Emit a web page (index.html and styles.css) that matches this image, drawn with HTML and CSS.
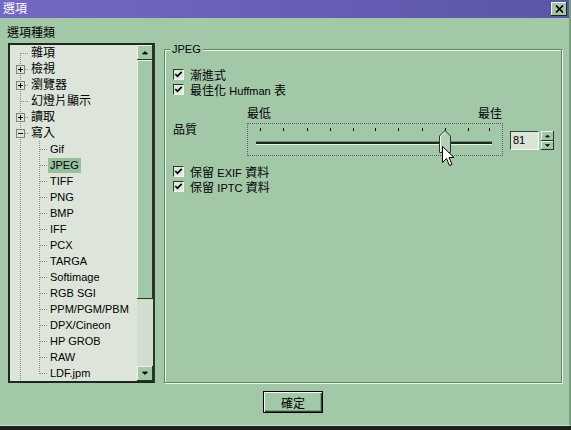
FILE: index.html
```html
<!DOCTYPE html>
<html lang="zh-TW">
<head>
    <meta charset="UTF-8">
    <title>選項</title>
    <link rel="stylesheet" href="styles.css">
</head>
<body>
    <div class="window">
        <div class="titlebar">
            <span class="title">選項</span>
            <button class="close">
                <svg width="9" height="8" viewBox="0 0 9 8"><path d="M1 0.5 L8 7.5 M8 0.5 L1 7.5" stroke="#000" stroke-width="1.7"/></svg>
            </button>
        </div>

        <div class="main">
            <div class="left">
                <div class="cat-label">選項種類</div>
                <div class="tree">
                    <ul class="tree-list">
                        <li class="row"><span class="g g-first"></span><span class="lbl">雜項</span></li>
                        <li class="row"><span class="g g-tee"><span class="pm plus"></span></span><span class="lbl">檢視</span></li>
                        <li class="row"><span class="g g-tee"><span class="pm plus"></span></span><span class="lbl">瀏覽器</span></li>
                        <li class="row"><span class="g g-tee"></span><span class="lbl">幻燈片顯示</span></li>
                        <li class="row"><span class="g g-tee"><span class="pm plus"></span></span><span class="lbl">讀取</span></li>
                        <li class="row"><span class="g g-tee"><span class="pm"></span></span><span class="lbl">寫入</span></li>
                        <li class="row"><span class="g g-pass"></span><span class="g g-tee"></span><span class="lbl en">Gif</span></li>
                        <li class="row"><span class="g g-pass"></span><span class="g g-tee"></span><span class="lbl en selected">JPEG</span></li>
                        <li class="row"><span class="g g-pass"></span><span class="g g-tee"></span><span class="lbl en">TIFF</span></li>
                        <li class="row"><span class="g g-pass"></span><span class="g g-tee"></span><span class="lbl en">PNG</span></li>
                        <li class="row"><span class="g g-pass"></span><span class="g g-tee"></span><span class="lbl en">BMP</span></li>
                        <li class="row"><span class="g g-pass"></span><span class="g g-tee"></span><span class="lbl en">IFF</span></li>
                        <li class="row"><span class="g g-pass"></span><span class="g g-tee"></span><span class="lbl en">PCX</span></li>
                        <li class="row"><span class="g g-pass"></span><span class="g g-tee"></span><span class="lbl en">TARGA</span></li>
                        <li class="row"><span class="g g-pass"></span><span class="g g-tee"></span><span class="lbl en">Softimage</span></li>
                        <li class="row"><span class="g g-pass"></span><span class="g g-tee"></span><span class="lbl en">RGB SGI</span></li>
                        <li class="row"><span class="g g-pass"></span><span class="g g-tee"></span><span class="lbl en">PPM/PGM/PBM</span></li>
                        <li class="row"><span class="g g-pass"></span><span class="g g-tee"></span><span class="lbl en">DPX/Cineon</span></li>
                        <li class="row"><span class="g g-pass"></span><span class="g g-tee"></span><span class="lbl en">HP GROB</span></li>
                        <li class="row"><span class="g g-pass"></span><span class="g g-tee"></span><span class="lbl en">RAW</span></li>
                        <li class="row"><span class="g g-pass"></span><span class="g g-last"></span><span class="lbl en">LDF.jpm</span></li>
                    </ul>
                    <div class="vscroll">
                        <div class="sb-btn">
                            <svg width="16" height="15" viewBox="0 0 16 15"><path d="M5.5 9 L8 6.5 L10.5 9 Z" fill="#000" stroke="#000" stroke-width="0.8"/></svg>
                        </div>
                        <div class="sb-track"><div class="sb-thumb"></div></div>
                        <div class="sb-btn">
                            <svg width="16" height="15" viewBox="0 0 16 15"><path d="M5.5 6 L8 8.5 L10.5 6 Z" fill="#000" stroke="#000" stroke-width="0.8"/></svg>
                        </div>
                    </div>
                </div>
            </div>

            <div class="group">
                <span class="legend">JPEG</span>

                <div class="checks">
                    <label class="check"><span class="cb"><svg width="9" height="9" viewBox="0 0 9 9"><polyline points="1.3,4 3.5,6.3 7.7,1.8" fill="none" stroke="#000" stroke-width="1.8"/></svg></span><span>漸進式</span></label>
                    <label class="check"><span class="cb"><svg width="9" height="9" viewBox="0 0 9 9"><polyline points="1.3,4 3.5,6.3 7.7,1.8" fill="none" stroke="#000" stroke-width="1.8"/></svg></span><span>最佳化 <span class="en">Huffman</span> 表</span></label>
                </div>

                <div class="quality">
                    <div class="q-label">品質</div>
                    <div class="q-slider">
                        <div class="q-ends"><span>最低</span><span>最佳</span></div>
                        <div class="slider">
                            <svg width="254" height="31" viewBox="0 0 254 31">
                                <g fill="#000">
                                    <rect x="12" y="4" width="1" height="3"/>
                                    <rect x="35" y="4" width="1" height="3"/>
                                    <rect x="59" y="4" width="1" height="3"/>
                                    <rect x="82" y="4" width="1" height="3"/>
                                    <rect x="105" y="4" width="1" height="3"/>
                                    <rect x="127" y="4" width="1" height="3"/>
                                    <rect x="150" y="4" width="1" height="3"/>
                                    <rect x="174" y="4" width="1" height="3"/>
                                    <rect x="197" y="4" width="1" height="3"/>
                                    <rect x="220" y="4" width="1" height="3"/>
                                    <rect x="241" y="4" width="1" height="3"/>
                                </g>
                                <rect x="8" y="17" width="236" height="1" fill="#6f8f74"/>
                                <rect x="8" y="18" width="236" height="2" fill="#1c281e"/>
                                <rect x="8" y="20" width="236" height="1" fill="#e6f1e7"/>
                                <path d="M191.5 12 L197 6.5 L202.5 12 L202.5 28.5 L191.5 28.5 Z" fill="#b2d1b7" stroke="#2a382c"/>
                                <path d="M192.5 28 L192.5 12.5 L197 8" fill="none" stroke="#f2f8f2"/>
                                <path d="M194.5 22.5 L194.5 38.5 L198.5 34.5 L201.5 41.5 L204 40.5 L201 33.5 L206 33.5 Z" fill="#fff" stroke="#000" stroke-linejoin="miter"/>
                            </svg>
                        </div>
                    </div>
                    <div class="spin">
                        <div class="spin-edit">81</div>
                        <div class="spin-btns">
                            <div class="spin-btn"><svg width="13" height="10" viewBox="0 0 13 10"><path d="M4.5 6 L6.5 4 L8.5 6 Z" fill="#000" stroke="#000" stroke-width="0.6"/></svg></div>
                            <div class="spin-btn"><svg width="13" height="9" viewBox="0 0 13 9"><path d="M4.5 3.5 L6.5 5.5 L8.5 3.5 Z" fill="#000" stroke="#000" stroke-width="0.6"/></svg></div>
                        </div>
                    </div>
                </div>

                <div class="checks checks-low">
                    <label class="check"><span class="cb"><svg width="9" height="9" viewBox="0 0 9 9"><polyline points="1.3,4 3.5,6.3 7.7,1.8" fill="none" stroke="#000" stroke-width="1.8"/></svg></span><span>保留 <span class="en">EXIF</span> 資料</span></label>
                    <label class="check"><span class="cb"><svg width="9" height="9" viewBox="0 0 9 9"><polyline points="1.3,4 3.5,6.3 7.7,1.8" fill="none" stroke="#000" stroke-width="1.8"/></svg></span><span>保留 <span class="en">IPTC</span> 資料</span></label>
                </div>
            </div>
        </div>

        <div class="footer">
            <button class="ok">確定</button>
        </div>
    </div>
</body>
</html>
```

FILE: styles.css
```css
* {
    box-sizing: border-box;
}
html, body {
    margin: 0;
    padding: 0;
}
body {
    width: 571px;
    height: 430px;
    overflow: hidden;
    background: #1c1f1c;
    font-family: "Liberation Sans", "Noto Sans CJK TC", sans-serif;
    font-size: 12px;
    color: #000;
}
.en {
    font-size: 11px;
}
.window {
    width: 571px;
    height: 426px;
    background: #a3c8a8;
    border-right: 2px solid #78a07f;
    border-bottom: 1px solid #c8dfcb;
}

/* title bar */
.titlebar {
    height: 18px;
    display: flex;
    align-items: center;
    justify-content: space-between;
    padding: 0 2px 0 3px;
    background: linear-gradient(to right, #7469c2, #5b56aa);
}
.title {
    color: #fff;
    line-height: 14px;
}
.close {
    width: 16px;
    height: 14px;
    padding: 0;
    border: none;
    background: #a3c8a8;
    box-shadow: inset -1px -1px #1d281f, inset 1px 1px #eef7ef;
    display: flex;
    align-items: center;
    justify-content: center;
}

/* main area */
.main {
    display: flex;
    height: 365px;
    padding: 8px 0 0 8px;
}
.left {
    width: 147px;
    display: flex;
    flex-direction: column;
}
.cat-label {
    height: 14px;
    line-height: 14px;
    margin: 0 0 3px -1px;
}
.tree {
    height: 340px;
    display: flex;
    background: #dde5da;
    border: 2px solid #1e281f;
    border-right-color: #2b362c;
}
.tree-list {
    flex: 1;
    margin: 0;
    padding: 0;
    list-style: none;
    overflow: hidden;
}
.row {
    height: 16px;
    display: flex;
    align-items: center;
    white-space: nowrap;
}
.lbl {
    padding: 0 2px;
    line-height: 15px;
}
.lbl.selected {
    background: #98bf9b;
}

/* dotted guides: a vertical line at x=10 and a stub to the label */
.g {
    flex: none;
    width: 19px;
    height: 16px;
    display: flex;
    align-items: center;
    padding-left: 6px;
    background-repeat: no-repeat;
    background-image:
        repeating-linear-gradient(to bottom, #838d83 0 1px, transparent 1px 2px),
        repeating-linear-gradient(to right, #838d83 0 1px, transparent 1px 2px);
    background-position: 10px 0, 11px 8px;
    background-size: 1px 16px, 8px 1px;
}
.g-first {
    background-position: 10px 8px, 11px 8px;
    background-size: 1px 8px, 8px 1px;
}
.g-last {
    background-size: 1px 9px, 8px 1px;
}
.g-pass {
    background-size: 1px 16px, 0 0;
}
.pm {
    width: 9px;
    height: 9px;
    border: 1px solid #7c857c;
    background:
        linear-gradient(#000, #000) center / 5px 1px no-repeat,
        #dde5da;
}
.pm.plus {
    background:
        linear-gradient(#000, #000) center / 5px 1px no-repeat,
        linear-gradient(#000, #000) center / 1px 5px no-repeat,
        #dde5da;
}

/* scroll bar */
.vscroll {
    width: 16px;
    display: flex;
    flex-direction: column;
}
.sb-btn {
    flex: none;
    height: 15px;
    background: #a3c8a8;
    box-shadow: inset -1px -1px #26322a, inset 1px 1px #e8f3e9;
}
.sb-btn svg {
    display: block;
}
.sb-track {
    flex: 1;
    background: #d1ddce;
}
.sb-thumb {
    height: 239px;
    background: #a3c8a8;
    box-shadow: inset -1px -1px #26322a, inset 1px 1px #e8f3e9;
}

/* group box */
.group {
    margin: 23px 0 0 9px;
    width: 398px;
    height: 334px;
    border: 1px solid #5b8a63;
    box-shadow: inset 1px 1px #eef6ee, 1px 1px #eef6ee;
    padding-left: 8px;
}
.legend {
    display: block;
    width: max-content;
    margin: -8px 0 0 -3px;
    padding: 0 2px;
    line-height: 14px;
    font-size: 11px;
    background: #a3c8a8;
}
.checks {
    margin-top: 11px;
}
.checks-low {
    margin-top: 8px;
}
.check {
    display: flex;
    align-items: center;
    height: 15px;
    gap: 6px;
    white-space: nowrap;
}
.cb {
    width: 11px;
    height: 11px;
    background: #e0e9dd;
    border: 1px solid;
    border-color: #2a372c #f2f9f2 #f2f9f2 #2a372c;
}
.cb svg {
    display: block;
}

.quality {
    display: flex;
    margin-top: 10px;
}
.q-label {
    width: 74px;
    margin-top: 16px;
    line-height: 14px;
}
.q-slider {
    width: 256px;
}
.q-ends {
    display: flex;
    justify-content: space-between;
    height: 14px;
    line-height: 14px;
    padding-right: 1px;
}
.slider {
    margin-top: 2px;
    width: 256px;
    height: 33px;
    border: 1px dotted #6e4f78;
}
.slider svg {
    display: block;
    overflow: visible;
}
.spin {
    display: flex;
    margin: 24px 0 0 7px;
    height: 19px;
}
.spin-edit {
    width: 29px;
    height: 19px;
    padding-left: 2px;
    line-height: 17px;
    font-size: 11px;
    background: #dae4d7;
    border: 1px solid;
    border-color: #34443a #f2f9f2 #f2f9f2 #34443a;
}
.spin-btns {
    width: 13px;
    margin-left: 2px;
    display: flex;
    flex-direction: column;
}
.spin-btn {
    flex: 1;
    background: #a3c8a8;
    box-shadow: inset -1px -1px #26322a, inset 1px 1px #e8f3e9;
}
.spin-btn svg {
    display: block;
}

/* footer */
.footer {
    margin-top: 8px;
    padding-left: 263px;
}
.ok {
    width: 60px;
    height: 22px;
    padding: 0;
    font-family: inherit;
    font-size: 12px;
    background: #a3c8a8;
    border: 1px solid #000;
    box-shadow: inset 1px 1px #f2f9f2, inset -1px -1px #34443a, inset -2px -2px #7ea284;
}
```
